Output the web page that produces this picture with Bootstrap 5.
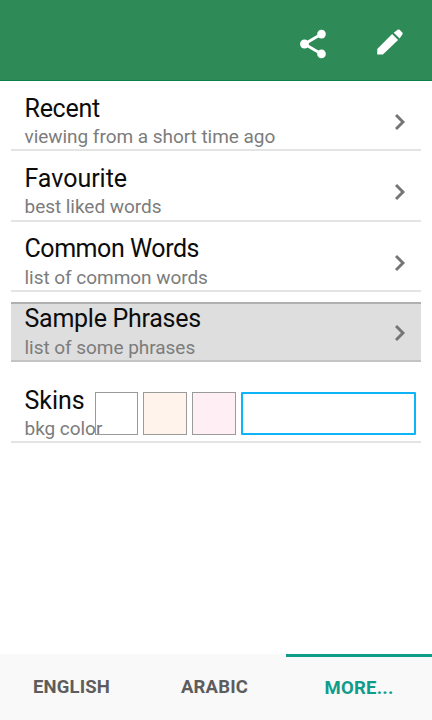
<!DOCTYPE html>
<html lang="en">
<head>
<meta charset="utf-8">
<meta name="viewport" content="width=device-width, initial-scale=1">
<title>Phrasebook</title>
<link href="https://cdn.jsdelivr.net/npm/bootstrap@5.3.0/dist/css/bootstrap.min.css" rel="stylesheet">
<style>
body{font-family:Roboto,"Liberation Sans",sans-serif;width:432px;height:720px;overflow:hidden;background:#fff}
.topbar{height:81px;background:#2e8b57;border-bottom:1px solid #0a8048;padding:0 25px 0 0;gap:42px}
.topbar svg{width:34px;height:34px;fill:#fff}
.topbar .share{margin:7px 1px 0 0}
.topbar .pencil{margin-top:4px}
.menu{padding:0 11px;margin:0}
.entry{height:70.3px;border-bottom:2px solid #e4e4e4;padding:13.5px 14px 0 13.5px}
.entry.picked{height:60px;margin-top:10px;background:#dedede;border-top:2px solid #b0b0b0;border-bottom-color:#c4c4c4;padding-top:1.5px}
.entry-title{font-size:25px;line-height:28px;color:#0c0c0c;letter-spacing:-.27px}
.entry-title.roomy{letter-spacing:-.03px}
.entry-title.snug{letter-spacing:-.45px}
.entry-note{font-size:19px;line-height:28px;color:#7c7c7c;letter-spacing:-.04px;margin-top:.5px}
.chev{width:10px;height:18px;fill:none;stroke:#757575;stroke-width:3;margin:18.500px 2px 0 0}
.entry.skins{height:81px;padding-top:25px;padding-right:6px}
.skins .labels{width:70px}
.swatches{gap:5px;margin-top:5px;height:43px}
.swatch{width:43.7px;height:43px;border:1px solid #9a9a9a}
.swatch-peach{background:#fff3ec}
.swatch-pink{background:#ffeef4}
.skin-input{width:175.5px;height:43px;border:2px solid #0db4f8;border-radius:1px;background:#fff}
.tabs{height:66px;background:#f9f9f9}
.tab-item{width:143px;padding-top:2px;font-size:18.5px;font-weight:700;color:#5d5d5d;letter-spacing:.15px}
.tab-item.on{width:146px;padding-top:0;border-top:3px solid #109c8b;color:#109c8b;letter-spacing:.25px}
</style>
<script src="https://cdn.jsdelivr.net/npm/bootstrap@5.3.0/dist/js/bootstrap.bundle.min.js"></script>
</head>
<body class="d-flex flex-column">
<header class="topbar d-flex justify-content-end align-items-center flex-shrink-0">
<svg class="share" viewBox="0 0 24 24"><path d="M18 5 6 12 18 19" fill="none" stroke="#fff" stroke-width="2"/><circle cx="18" cy="5" r="3.050"/><circle cx="6" cy="12" r="3.150"/><circle cx="18" cy="19" r="3.050"/></svg>
<svg class="pencil" viewBox="0 0 24 24"><path d="M3 16.900V20.900h4L17.700 10.500l-4.200-4.200zM20.800 6.600c.300-.400.300-.900 0-1.200l-2-2c-.400-.400-1-.400-1.400 0l-2.800 2 4.200 4.200z"/></svg>
</header>
<main class="menu flex-grow-1">
<div class="entry d-flex justify-content-between"><div><div class="entry-title">Recent</div><div class="entry-note">viewing from a short time ago</div></div><svg class="chev" viewBox="0 0 10 18"><path d="M1 2 8 9 1 16"/></svg></div>
<div class="entry d-flex justify-content-between"><div><div class="entry-title roomy">Favourite</div><div class="entry-note">best liked words</div></div><svg class="chev" viewBox="0 0 10 18"><path d="M1 2 8 9 1 16"/></svg></div>
<div class="entry d-flex justify-content-between"><div><div class="entry-title snug">Common Words</div><div class="entry-note">list of common words</div></div><svg class="chev" viewBox="0 0 10 18"><path d="M1 2 8 9 1 16"/></svg></div>
<div class="entry picked d-flex justify-content-between"><div><div class="entry-title">Sample Phrases</div><div class="entry-note">list of some phrases</div></div><svg class="chev" viewBox="0 0 10 18"><path d="M1 2 8 9 1 16"/></svg></div>
<div class="entry skins d-flex"><div class="labels text-nowrap flex-shrink-0"><div class="entry-title roomy">Skins</div><div class="entry-note">bkg color</div></div>
<div class="swatches d-flex flex-shrink-0"><div class="swatch"></div><div class="swatch swatch-peach"></div><div class="swatch swatch-pink"></div><div class="skin-input"></div></div></div>
</main>
<nav class="tabs d-flex flex-shrink-0">
<div class="tab-item d-flex align-items-center justify-content-center">ENGLISH</div>
<div class="tab-item d-flex align-items-center justify-content-center">ARABIC</div>
<div class="tab-item on d-flex align-items-center justify-content-center">MORE...</div>
</nav>
</body>
</html>
